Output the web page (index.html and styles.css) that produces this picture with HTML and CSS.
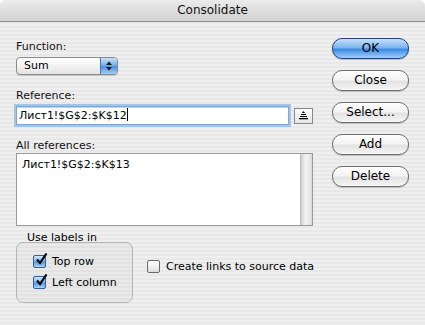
FILE: index.html
```html
<!DOCTYPE html>
<html lang="en">

<head>
    <meta charset="UTF-8">
    <title>Consolidate</title>
    <link rel="stylesheet" href="styles.css">
</head>

<body>
    <div class="window">
        <div class="titlebar">Consolidate</div>

        <div class="content">
            <div class="left">
                <div class="label first">Function:</div>
                <div class="popup">
                    <span class="popup-text">Sum</span>
                    <span class="popup-arrows">
                        <svg width="8" height="10" viewBox="0 0 8 10">
                            <path d="M4 0.5 L7 4 L1 4 Z" fill="#1a1a1a" />
                            <path d="M4 9.5 L7 6 L1 6 Z" fill="#1a1a1a" />
                        </svg>
                    </span>
                </div>

                <div class="label">Reference:</div>
                <div class="ref-row">
                    <div class="ref-input">Лист1!$G$2:$K$12<span class="caret"></span></div>
                    <div class="collapse-btn">
                        <svg width="11" height="9" viewBox="0 0 11 9">
                            <path d="M5.5 0 L7 2 L4 2 Z" fill="#000" />
                            <rect x="3" y="3" width="5" height="1" fill="#000" />
                            <rect x="2" y="5" width="7" height="1" fill="#000" />
                            <rect x="1" y="7" width="9" height="1.3" fill="#000" />
                        </svg>
                    </div>
                </div>

                <div class="label">All references:</div>
                <div class="ref-list">
                    <div class="list-items">
                        <div class="list-item">Лист1!$G$2:$K$13</div>
                    </div>
                    <div class="scrollbar"></div>
                </div>

                <div class="bottom-row">
                    <div class="group">
                        <div class="group-title">Use labels in</div>
                        <div class="group-box">
                            <div class="check-row">
                                <span class="checkbox checked">
                                    <svg width="14" height="14" viewBox="0 0 14 14">
                                        <path d="M3 6.5 L6 10 L12.5 0.5" fill="none" stroke="#0a0a0a" stroke-width="2.2" />
                                    </svg>
                                </span>
                                Top row
                            </div>
                            <div class="check-row">
                                <span class="checkbox checked">
                                    <svg width="14" height="14" viewBox="0 0 14 14">
                                        <path d="M3 6.5 L6 10 L12.5 0.5" fill="none" stroke="#0a0a0a" stroke-width="2.2" />
                                    </svg>
                                </span>
                                Left column
                            </div>
                        </div>
                    </div>
                    <div class="check-row links">
                        <span class="checkbox"></span>
                        Create links to source data
                    </div>
                </div>
            </div>

            <div class="buttons">
                <div class="btn default">OK</div>
                <div class="btn">Close</div>
                <div class="btn">Select...</div>
                <div class="btn">Add</div>
                <div class="btn">Delete</div>
            </div>
        </div>
    </div>
</body>

</html>
```

FILE: styles.css
```css
body {
    margin: 0;
    font-family: "DejaVu Sans", sans-serif;
    font-size: 11px;
    color: #000;
    background: #fff;
}

.window {
    width: 425px;
    height: 325px;
    overflow: hidden;
    border-radius: 6px 6px 0 0;
    background: repeating-linear-gradient(180deg, #efefef 0px, #efefef 2px, #e8e8e8 2px, #e8e8e8 4px);
}

.titlebar {
    height: 21px;
    line-height: 21px;
    text-align: center;
    font-size: 12px;
    color: #111;
    background: linear-gradient(180deg, #ececec 0%, #dcdcdc 55%, #d2d2d2 100%);
    border-bottom: 1px solid #8c8c8c;
}

.content {
    display: flex;
    padding-left: 16px;
}

.left {
    width: 300px;
}

.label {
    height: 14px;
    line-height: 14px;
    margin-top: 14px;
    color: #111;
}

.label.first {
    margin-top: 18px;
}

.popup {
    display: flex;
    width: 100px;
    height: 16px;
    margin-top: 3px;
    border: 1px solid #8a8a8a;
    border-radius: 4px;
    overflow: hidden;
    background: linear-gradient(180deg, #ffffff 0%, #f2f2f2 50%, #e4e4e4 100%);
    box-shadow: 0 1px 1px rgba(0, 0, 0, 0.15);
}

.popup-text {
    flex: 1;
    padding-left: 7px;
    line-height: 16px;
}

.popup-arrows {
    width: 16px;
    display: flex;
    align-items: center;
    justify-content: center;
    border-left: 1px solid #4b73b8;
    background: linear-gradient(180deg, #c9e2fb 0%, #77b0ef 45%, #4c8fe1 55%, #a3cffa 100%);
}

.ref-row {
    display: flex;
    align-items: center;
    margin-top: 3px;
}

.ref-input {
    width: 267px;
    height: 15px;
    line-height: 15px;
    padding: 1px 2px;
    background: #fff;
    border: 1px solid #7fa6d2;
    box-shadow: 0 0 0 2px #a6c4e4, inset 0 1px 1px rgba(0, 0, 0, 0.2);
    white-space: nowrap;
}

.caret {
    display: inline-block;
    width: 1px;
    height: 13px;
    background: #000;
    vertical-align: -2px;
}

.collapse-btn {
    width: 17px;
    height: 14px;
    margin-left: 5px;
    display: flex;
    align-items: center;
    justify-content: center;
    border: 1px solid #888;
    background: linear-gradient(180deg, #fdfdfd 0%, #e6e6e6 100%);
}

.ref-list {
    display: flex;
    width: 295px;
    height: 71px;
    border: 1px solid #9a9a9a;
    background: #fff;
}

.list-items {
    flex: 1;
    padding: 4px 5px;
}

.list-item {
    height: 14px;
    line-height: 14px;
}

.scrollbar {
    width: 11px;
    border-left: 1px solid #bdbdbd;
    background: linear-gradient(90deg, #cfcfcf 0%, #f2f2f2 40%, #ececec 70%, #dadada 100%);
}

.bottom-row {
    display: flex;
    align-items: flex-start;
    margin-top: 5px;
}

.group-title {
    height: 14px;
    line-height: 14px;
    padding-left: 11px;
}

.group-box {
    width: 117px;
    height: 61px;
    margin-top: -3px;
    padding-top: 8px;
    padding-left: 16px;
    box-sizing: border-box;
    border: 1px solid #b4b4b4;
    border-radius: 7px;
    background: rgba(0, 0, 0, 0.025);
}

.check-row {
    display: flex;
    align-items: center;
    height: 21px;
    gap: 6px;
    white-space: nowrap;
}

.checkbox {
    width: 11px;
    height: 11px;
    border: 1px solid #6a6a6a;
    border-radius: 2px;
    position: relative;
    background: linear-gradient(180deg, #fefefe 0%, #f0f0f0 50%, #dedede 100%);
    flex-shrink: 0;
}

.checkbox.checked {
    border-color: #3a5d94;
    background: linear-gradient(180deg, #d3e8fd 0%, #7fb6ef 45%, #4f95e3 55%, #aed5fb 100%);
}

.checkbox svg {
    position: absolute;
    left: 0px;
    top: -3px;
}

.check-row.links {
    margin-top: 25px;
    margin-left: 14px;
}

.buttons {
    display: flex;
    flex-direction: column;
    gap: 11px;
    margin-left: 16px;
    margin-top: 16px;
}

.btn {
    width: 75px;
    height: 19px;
    line-height: 19px;
    text-align: center;
    font-size: 12px;
    border: 1px solid #6e6e6e;
    border-radius: 10px;
    background: linear-gradient(180deg, #ffffff 0%, #f4f4f4 45%, #e2e2e2 55%, #f6f6f6 100%);
    box-shadow: 0 1px 1px rgba(0, 0, 0, 0.2);
}

.btn.default {
    border-color: #24407a;
    background: linear-gradient(180deg, #c6e0fb 0%, #7db5f0 45%, #3f8ae2 55%, #9fd0fb 100%);
}
```
